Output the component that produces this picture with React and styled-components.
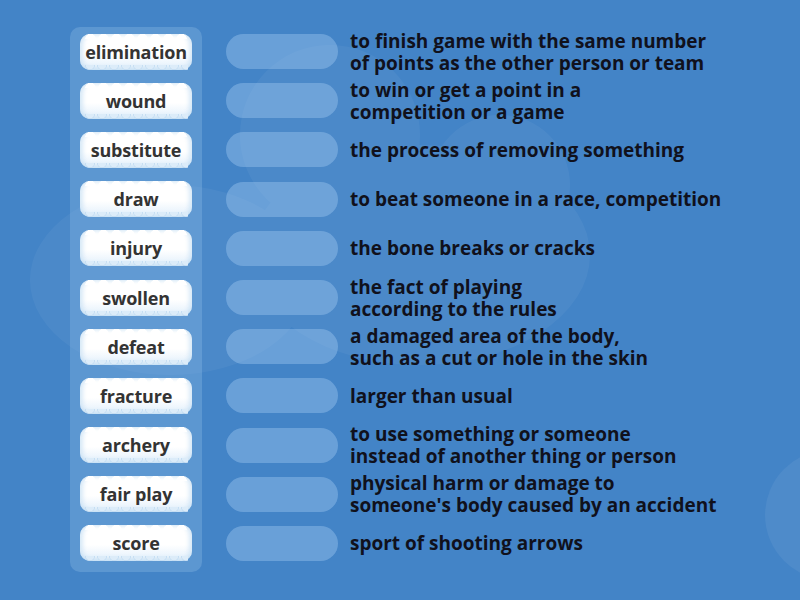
import styled, { createGlobalStyle } from "styled-components"

const GlobalStyle = createGlobalStyle`
    html, body {
        margin: 0;
        padding: 0;
        background: #4384c7;
    }
`

const terms = [
    "elimination", "wound", "substitute", "draw", "injury", "swollen",
    "defeat", "fracture", "archery", "fair play", "score",
]

const definitions = [
    ["to finish game with the same number", "of points as the other person or team"],
    ["to win or get a point in a", "competition or a game"],
    ["the process of removing something"],
    ["to beat someone in a race, competition"],
    ["the bone breaks or cracks"],
    ["the fact of playing", "according to the rules"],
    ["a damaged area of the body,", "such as a cut or hole in the skin"],
    ["larger than usual"],
    ["to use something or someone", "instead of another thing or person"],
    ["physical harm or damage to", "someone's body caused by an accident"],
    ["sport of shooting arrows"],
]

const ROW = 49.2

const Stage = styled.div`
    position: relative;
    width: 800px;
    height: 600px;
    overflow: hidden;
    background: #4384c7;
    font-family: "Open Sans", "Noto Sans", sans-serif;
`

const Backdrop = styled.svg`
    position: absolute;
    inset: 0;
    pointer-events: none;
`

const Board = styled.div`
    position: relative;
    display: flex;
    align-items: flex-start;
    padding: 27px 0 0 70px;
`

const Panel = styled.div`
    display: flex;
    flex-direction: column;
    width: 132px;
    padding-bottom: 4px;
    background: rgba(140, 185, 230, 0.35);
    border-radius: 10px;
`

const TileRow = styled.div`
    height: ${ROW}px;
    display: flex;
    align-items: center;
    justify-content: center;
`

/* cloud card: white body with puffy scalloped top and bottom rims */
const Tile = styled.div`
    position: relative;
    width: 112px;
    height: 36px;
    display: flex;
    align-items: center;
    justify-content: center;
    background: linear-gradient(#ffffff 55%, #eef6fd 80%, #d6e9f8);
    border-radius: 10px;
    box-shadow:
        inset 3px 0 4px rgba(190, 218, 242, 0.6),
        inset -3px 0 4px rgba(190, 218, 242, 0.6);
    color: #333;
    font-size: 18px;
    font-weight: 700;
    letter-spacing: -0.2px;

    span {
        position: relative;
        z-index: 1;
    }

    &::before, &::after {
        content: "";
        position: absolute;
        left: 4px;
        right: 4px;
        height: 8px;
    }
    &::before {
        top: -3px;
        background: radial-gradient(circle at 50% 100%, #ffffff 0 5px, transparent 5.5px) 0 0 / 13px 8px repeat-x;
    }
    &::after {
        bottom: -3px;
        background: radial-gradient(circle at 50% 0%, #dcecf9 0 4px, #c3dcf2 4.6px, transparent 5.4px) 0 0 / 12px 8px repeat-x;
    }
`

const Pairs = styled.div`
    display: flex;
    flex-direction: column;
    margin-left: 24px;
`

const Pair = styled.div`
    height: ${ROW}px;
    display: flex;
    align-items: center;
    gap: 12px;
`

const Slot = styled.div`
    flex: none;
    width: 112px;
    height: 35px;
    border-radius: 18px;
    background: rgba(160, 200, 240, 0.42);
`

const Definition = styled.div`
    color: #10111c;
    font-size: 19px;
    font-weight: 700;
    line-height: 22px;
    letter-spacing: 0;
    white-space: nowrap;
`

const CloudBackdrop = () => (
    <Backdrop width="800" height="600" viewBox="0 0 800 600">
        <g fill="#ffffff" opacity="0.045">
            <circle cx="330" cy="135" r="90" />
            <ellipse cx="170" cy="280" rx="140" ry="95" />
            <ellipse cx="420" cy="255" rx="170" ry="110" />
            <circle cx="500" cy="185" r="70" />
        </g>
        <g fill="#ffffff" opacity="0.06">
            <circle cx="830" cy="515" r="65" />
        </g>
    </Backdrop>
)

const App = () => {
    return (
        <Stage>
            <GlobalStyle />
            <CloudBackdrop />
            <Board>
                <Panel>
                    {terms.map((term) => (
                        <TileRow key={term}>
                            <Tile><span>{term}</span></Tile>
                        </TileRow>
                    ))}
                </Panel>
                <Pairs>
                    {definitions.map((lines, i) => (
                        <Pair key={i}>
                            <Slot />
                            <Definition>
                                {lines.map((line) => (
                                    <div key={line}>{line}</div>
                                ))}
                            </Definition>
                        </Pair>
                    ))}
                </Pairs>
            </Board>
        </Stage>
    )
}

export default App
